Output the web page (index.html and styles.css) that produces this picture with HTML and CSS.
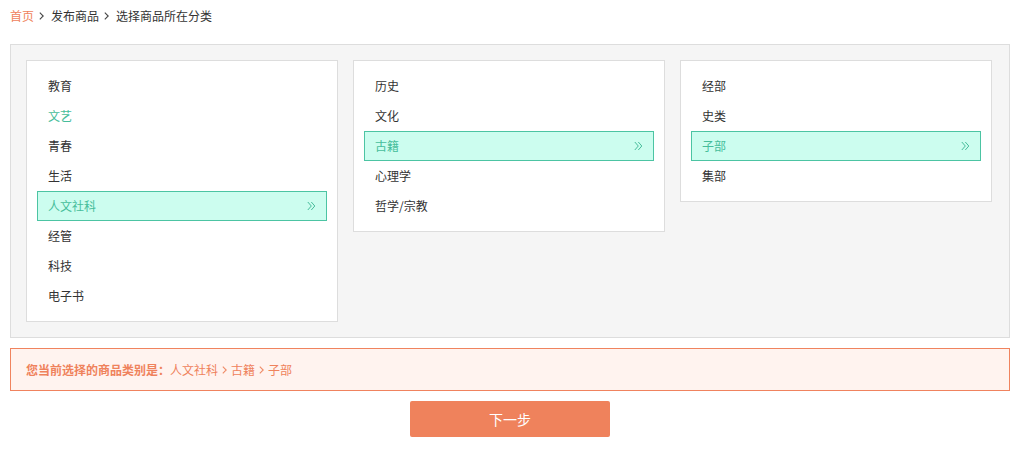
FILE: index.html
```html
<!DOCTYPE html>
<html>
<head>
    <meta charset="UTF-8">
    <meta name="viewport" content="width=device-width, initial-scale=1.0">
    <title>选择商品所在分类</title>
    <link rel="stylesheet" href="styles.css">
</head>
<body>
    <div class="wrap">
        <div class="crumb">
            <a href="#" class="home">首页</a>
            <svg class="sep" width="5" height="8" viewBox="0 0 5 8"><path d="M0.8 0.6 L4.2 4 L0.8 7.4" fill="none" stroke="#444" stroke-width="1.1"/></svg>
            <span>发布商品</span>
            <svg class="sep" width="5" height="8" viewBox="0 0 5 8"><path d="M0.8 0.6 L4.2 4 L0.8 7.4" fill="none" stroke="#444" stroke-width="1.1"/></svg>
            <span>选择商品所在分类</span>
        </div>

        <div class="cateBox">
            <ul class="cateList">
                <li>教育</li>
                <li class="hover">文艺</li>
                <li>青春</li>
                <li>生活</li>
                <li class="on">人文社科<svg width="9" height="10" viewBox="0 0 9 10"><path d="M0.8 1 L4.3 5 L0.8 9 M4.3 1 L7.8 5 L4.3 9" fill="none" stroke="#47bd9b" stroke-width="1"/></svg></li>
                <li>经管</li>
                <li>科技</li>
                <li>电子书</li>
            </ul>
            <ul class="cateList">
                <li>历史</li>
                <li>文化</li>
                <li class="on">古籍<svg width="9" height="10" viewBox="0 0 9 10"><path d="M0.8 1 L4.3 5 L0.8 9 M4.3 1 L7.8 5 L4.3 9" fill="none" stroke="#47bd9b" stroke-width="1"/></svg></li>
                <li>心理学</li>
                <li>哲学/宗教</li>
            </ul>
            <ul class="cateList">
                <li>经部</li>
                <li>史类</li>
                <li class="on">子部<svg width="9" height="10" viewBox="0 0 9 10"><path d="M0.8 1 L4.3 5 L0.8 9 M4.3 1 L7.8 5 L4.3 9" fill="none" stroke="#47bd9b" stroke-width="1"/></svg></li>
                <li>集部</li>
            </ul>
        </div>

        <div class="current">
            <b>您当前选择的商品类别是：</b><span>人文社科</span>
            <svg class="arr" width="5" height="8" viewBox="0 0 5 8"><path d="M0.8 0.6 L4.2 4 L0.8 7.4" fill="none" stroke="#ef8a66" stroke-width="1.1"/></svg>
            <span>古籍</span>
            <svg class="arr" width="5" height="8" viewBox="0 0 5 8"><path d="M0.8 0.6 L4.2 4 L0.8 7.4" fill="none" stroke="#ef8a66" stroke-width="1.1"/></svg>
            <span>子部</span>
        </div>

        <div class="btnBox">
            <a href="#" class="nextBtn">下一步</a>
        </div>
    </div>
</body>
</html>
```

FILE: styles.css
```css
*{ margin: 0; padding: 0; box-sizing: border-box; }
body{ font-family: "Noto Sans CJK SC", "Liberation Sans", sans-serif; font-size: 12px; color: #333; }
ul{ list-style: none; }
a{ text-decoration: none; }
.wrap{ width: 1000px; padding: 0 0 0 10px; }

.crumb{ height: 31px; display: flex; align-items: center; color: #333; }
.crumb .home{ color: #ef825c; }
.crumb .sep{ margin: 0 7px 0 5px; }

.cateBox{ margin-top: 13px; width: 1000px; padding: 15px; border: 1px solid #ddd; background: #f5f5f5; display: flex; align-items: flex-start; gap: 15px; }
.cateList{ width: 312px; padding: 10px; border: 1px solid #ddd; background: #fff; }
.cateList li{ height: 30px; padding: 0 10px 1px; border: 1px solid transparent; display: flex; align-items: center; justify-content: space-between; cursor: pointer; }
.cateList li.hover{ color: #47bd9b; }
.cateList li.on{ color: #47bd9b; background: #ccfdef; border-color: #4cc4a3; }

.current{ margin-top: 10px; width: 1000px; height: 43px; padding: 0 15px; border: 1px solid #f0835e; background: #fff3ef; color: #ef825c; display: flex; align-items: center; }
.current b{ font-weight: bold; }
.current .arr{ margin: 0 4px; }

.btnBox{ width: 1000px; margin-top: 10px; display: flex; justify-content: center; }
.nextBtn{ display: block; width: 200px; height: 36px; line-height: 36px; text-align: center; background: #ef825c; color: #fff; font-size: 14px; border-radius: 2px; }
```
